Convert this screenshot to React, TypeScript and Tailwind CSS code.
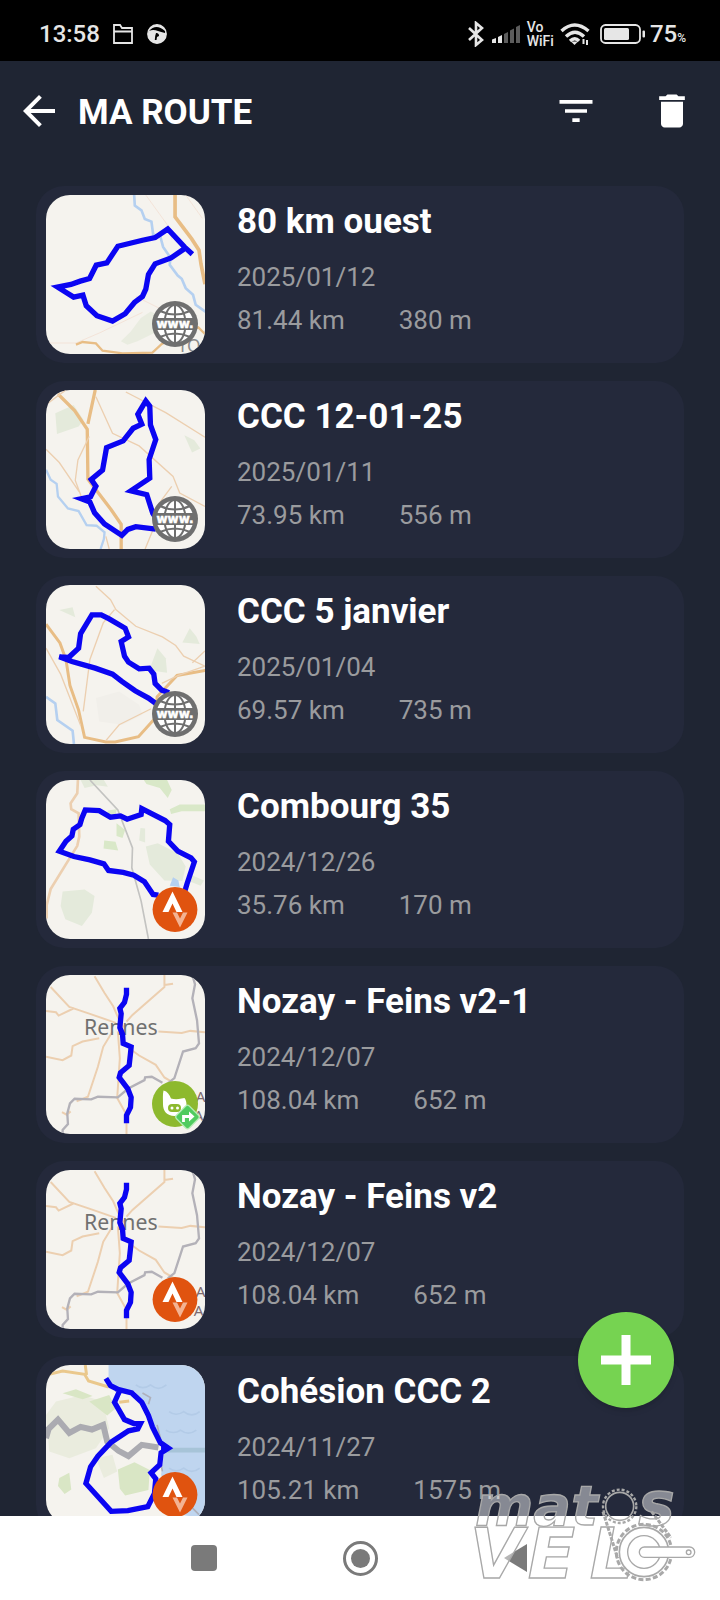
import type { ReactNode } from 'react';
import { MdArrowBack, MdDelete, MdFilterList } from 'react-icons/md';

type BadgeKind = 'web' | 'strava' | 'planner';

interface Route {
  name: string;
  date: string;
  distance: string;
  climb: string;
  badge: BadgeKind;
  map: ReactNode;
}

const ROAD = '#eccfb0';
const MAIN_ROAD = '#e8bd85';
const WATER = '#b5d0f0';
const WOOD = '#e4eadb';
const BORDER = '#b3b1b8';

function Track({ d }: { d: string }) {
  return <path d={d} fill="none" stroke="#0b05f2" strokeWidth="16" strokeLinejoin="miter" />;
}

function OuestMap() {
  return (
    <g fill="none">
      <path d="M285 370l30-20 40 20-20 40-60 30-30 10-20-10 30-30z" fill="#e9ece0" />
      <path d="M265 0l2 32 20 14 10 26 20 8 5 38 22 8 8 30 22 32-2 22 24 32 12 10 12 28 22 20 8 30 28 20h8" stroke={WATER} strokeWidth="8" />
      <path d="M388 0v66l50 66 22 34 6 42 12 60" stroke={MAIN_ROAD} strokeWidth="11" />
      <path d="M300 0l65 90 14 45M420 0l50 70M270 305l70 35M0 445h90l70-30 130-62" stroke="#f3e3d8" strokeWidth="3" />
      <path d="M90 450l20-8 40 4 20 22 60 8 90-2 28-26 60-30 50-20 20 20" stroke={MAIN_ROAD} strokeWidth="7" />
      <text x="396" y="472" fill="#8b8b8b" fontFamily="Noto Sans" fontSize="52">TO</text>
      <Track d="M440 178l-24-22-50-54-38 26-38 8-74 18-33 50-32 7-20 40-28 8-28 10-40 8 48 30 28-6 10 32 32 30 47 16 38-22 28-34 24-18 10-22 8-44 20-32 48-18 38-26" />
    </g>
  );
}

function Ccc12Map() {
  return (
    <g fill="none">
      <path d="M28 70l55-25 30 45-15 20-65 22z" fill={WOOD} />
      <path d="M416 136l30 15 18 25-25 12z" fill={WOOD} />
      <path d="M0 240l14 30 18 12 4 38 30 36 32 8 24 42 30 2 24 20-2 20-10 30" stroke={WATER} strokeWidth="7" />
      <path d="M36 12l50 50 38 56 2 150 70 92 30 44v74M148 0l-22 102" stroke={MAIN_ROAD} strokeWidth="10" />
      <path d="M0 44L60 0M150 20l50 110 80 38 102 92 20 50 76 40M240 6l120 62 118 74M378 290l-58 78M0 178l40 40 60 88M130 140l-34 70-8 62 18 48M180 440l10 38M330 400l-32 78" stroke={ROAD} strokeWidth="4" />
      <Track d="M330 418l-60-7-24 8-18 18-52-34-30-34-14-32-26-10 28-6 16-32-14-20 34-28 12-68 50-20 30-38 26-12-12-30 24-40 12 16 2 56 16 44-20 60 2 56-57 38 48 12 18 56 18 26" />
    </g>
  );
}

function Ccc5Map() {
  return (
    <g fill="none">
      <path d="M335 190l25 30 4 44-54-8z" fill={WOOD} />
      <path d="M432 130l20 25 10 22-52-4zM40 75l40-8 8 30z" fill={WOOD} />
      <path d="M150 340l70-20 60 40 10 30-60 30-70-10z" fill="#f1efea" />
      <path d="M0 336l28 20 6 50 46 32 4 40" stroke={WATER} strokeWidth="8" />
      <path d="M0 118l42 56 18 50 12 78 26 74 18 82 64 14h28l70-16 54-60 2-60 60-64 126-22" stroke={MAIN_ROAD} strokeWidth="9" />
      <path d="M150 4l44 40 16 30 60 50 80 32 40 26 24 32 64 30-80 28-50 24M206 74l-34 40-40 110-20 156M0 190l44 78 60 154M180 468l40-48 96-48M440 234l38-36" stroke={ROAD} strokeWidth="4" />
      <Track d="M370 324l-22-8-20-20-4-28-14-18-30 2-32-20-12-18-10-44 22-14-10-26-48-28-24-12h-28l-34 56-6 44-30 28-28-2 38 14 70 20 52 18 28 22 40 28 40 22 30 22" />
    </g>
  );
}

function CombourgMap() {
  return (
    <g fill="none">
      <path d="M294 0h70l14 30-12 24-24-30-40-12zM372 88l30-14h76v20h-70l-32 8zM175 182l34 4 8 26-44-6zM212 130l26 20-8 24-18-6zM185 92l28-4-6 24-20-2z" fill="#d9e8c8" />
      <path d="M300 200l36-10 60 30 24 40-10 44-54-2-44-48zM50 335l66-6 30 20-8 50-30 40-50-20-14-40zM284 144l14 2v42l-18-6zM425 280l50 22-10 16-40-16zM104 0h70l12 20-34-4-36 8z" fill={WOOD} />
      <path d="M372 318l10-26 16 10 4 20z" fill={WATER} />
      <path d="M96 0l-2 40-20 30 2 18 22 12 2 70-6 28-80 130-12 48v40" stroke={ROAD} strokeWidth="8" />
      <path d="M132 0l84 90 44 114-2 60 28 100 22 114" stroke="#c3c3c1" strokeWidth="5" />
      <Track d="M338 346l-16-2-26-38-32-20-32-8-44-6-14-20-42-12-48-10-44-16 20-30 18-16 4-20 20-14 6-20 10-24 42 2 34 20 30-4 20 10 42-14 2-18 70 36 14 12-4 50 28 30 40 20 10 12-22 66-6 20" />
    </g>
  );
}

function RennesMap() {
  return (
    <g fill="none">
      <path d="M146 4l30 50 26 40 20 46 12 18M14 36l56 60 60 20 80 28M0 108l30 4 8 10 46-22M0 246l50 10 26-14 4-28 30-14 50-10M356 0v36L260 120l-18 20M356 30l26-4M478 172l-44-4-26 6-70-4M200 170l-28 46-16 60-30 90-34 14M216 170l6 80-8 120 28 50v58M250 220l30 22 50 28 26 38 30 18M48 412l14 8 12-10" stroke={ROAD} strokeWidth="6" />
      <path d="M440 0l8 28-8 42 14 66 6 70-10 14-38 10-26 80-20 16M350 324l-32-18-20 2-2 8-50 26-30 26-60-2-20 8-50-2-14 14-8 30 2 32-16 18v14" stroke={BORDER} strokeWidth="7" />
      <text x="114" y="181" fill="#707070" fontFamily="Noto Sans" fontSize="64">Rennes</text>
      <text x="450" y="382" fill="#7d6a70" fontFamily="Noto Sans" fontSize="46">A</text>
      <text x="444" y="440" fill="#7d6a70" fontFamily="Noto Sans" fontSize="46">A</text>
      <Track d="M242 38v20l-6 24-14 18 4 16-4 42 8 20 2 28 24 10-2 20-4 36-26 22-4 14 26 34 10 26-2 30-12 24v24" />
    </g>
  );
}

function CohesionMap() {
  return (
    <g fill="none">
      <path d="M188 0v60l80 20 28 40 30 70 30 60-10 80 20 60 40 60 60 10 42 20V0z" fill="#bfd5ef" />
      <path d="M270 60q20 16 44 0 24 20 48 0M370 140q20 16 44 0 24 20 48 0M360 196q24 14 44 0 24 18 48 0M370 310q20 16 44 0 24 20 48 0" stroke="#b3cbe7" strokeWidth="5" />
      <path d="M0 150l30-40 80-20 60 20 20 80-40 60-80 30-60-20zM150 280l50-10 14 50-40 20z" fill="#eaecde" />
      <path d="M50 85l40-12 50 20-30 10zM216 314l50-22 46 24-4 60-70 16-16-20zM40 340l30-16 6 50-20 14-20-24zM130 110l60-20 20 40-26 22z" fill="#d9e6c5" />
      <path d="M0 220l8-28 28-28 34 40 34-18 34 8 34-14 12 50 34 28 30 16 40-34 50 8" stroke="#ababb1" strokeWidth="18" />
      <path d="M360 256h118" stroke="#a7c4d8" strokeWidth="14" />
      <path d="M0 30l50-12 66 10 12 20 60 18M118 0l4 30M220 112l30-4" stroke="#eac88c" strokeWidth="9" />
      <path d="M290 84l24 14-6 20M334 180l10 40M344 290l6 30M430 420l30 30" stroke="#aeb0bb" strokeWidth="5" />
      <Track d="M180 40l14 22 28 14-16 36 30 52 28 12h20l-8 16-28 6-52 34-40 42-22 32-14 50 76 84 50-2 60-12 20-40 4-44-14-18 26-24 4-36 22-14-24-16-24-48-12-34-20-40-30-28-48-12" />
      <path d="M346 226l32 24-32 16z" fill="#0b05f2" />
    </g>
  );
}

function WebBadge() {
  return (
    <svg viewBox="0 0 46 46" className="size-[46px]">
      <circle cx="23" cy="23" r="23" fill="#6f6f6f" />
      <circle cx="23" cy="23" r="18.5" fill="#fff" />
      <g fill="none" stroke="#6f6f6f" strokeWidth="2">
        <path d="M23 4v38M8 10q15 7 30 0M8 36q15-7 30 0" />
        <ellipse cx="23" cy="23" rx="10.5" ry="19" />
      </g>
      <path d="M3 17h40v12H3z" fill="#6f6f6f" />
      <text x="23" y="27" textAnchor="middle" fill="#fff" stroke="#fff" strokeWidth="0.5" fontFamily="DejaVu Sans" fontWeight="700" fontSize="12">www.</text>
    </svg>
  );
}

function StravaBadge() {
  return (
    <svg viewBox="0 0 46 46" className="size-[46px]">
      <circle cx="23" cy="23.500" r="22.400" fill="#e0530f" />
      <path d="M20.500 5.500l10 20.500h-6l-4-8.500-4 8.500h-6z" fill="#fff" />
      <path d="M20.500 26.500h4.500l3 6 3-6h4.500l-7.500 15z" fill="#f3b393" />
    </svg>
  );
}

function PlannerBadge() {
  return (
    <svg viewBox="0 0 46 46" className="size-[46px] overflow-visible">
      <circle cx="23" cy="23" r="23" fill="#8db92e" />
      <path d="M11.500 9.500c4 1 6 4 7.500 8 3 1 7 1 10.500 0l3-.5c1.500 2 2 4 2 7 0 7-5 11-12 11-7.500 0-11.500-5-11.500-11.500 0-5-.5-10 .5-14z" fill="#fff" />
      <rect x="16" y="23" width="13" height="8" rx="4" fill="#8db92e" />
      <circle cx="20" cy="27" r="1.500" fill="#fff" />
      <circle cx="25.500" cy="27" r="1.500" fill="#fff" />
      <rect x="26.500" y="27" width="18" height="18" rx="2.500" transform="rotate(45 35.500 36)" fill="#4fcb5f" stroke="#b5ecb4" strokeWidth="1.200" />
      <path d="M31.500 41v-5.500h7" fill="none" stroke="#fff" strokeWidth="2.800" />
      <path d="M37 30.500l5.500 5-5.500 5z" fill="#fff" />
    </svg>
  );
}

const badges: Record<BadgeKind, ReactNode> = {
  web: <WebBadge />,
  strava: <StravaBadge />,
  planner: <PlannerBadge />,
};

const routes: Route[] = [
  { name: '80 km ouest', date: '2025/01/12', distance: '81.44 km', climb: '380 m', badge: 'web', map: <OuestMap /> },
  { name: 'CCC 12-01-25', date: '2025/01/11', distance: '73.95 km', climb: '556 m', badge: 'web', map: <Ccc12Map /> },
  { name: 'CCC 5 janvier', date: '2025/01/04', distance: '69.57 km', climb: '735 m', badge: 'web', map: <Ccc5Map /> },
  { name: 'Combourg 35', date: '2024/12/26', distance: '35.76 km', climb: '170 m', badge: 'strava', map: <CombourgMap /> },
  { name: 'Nozay - Feins v2-1', date: '2024/12/07', distance: '108.04 km', climb: '652 m', badge: 'planner', map: <RennesMap /> },
  { name: 'Nozay - Feins v2', date: '2024/12/07', distance: '108.04 km', climb: '652 m', badge: 'strava', map: <RennesMap /> },
  { name: 'Cohésion CCC 2', date: '2024/11/27', distance: '105.21 km', climb: '1575 m', badge: 'strava', map: <CohesionMap /> },
];

function RouteCard({ route }: { route: Route }) {
  return (
    <li className="flex gap-8 rounded-[28px] bg-[#24293b] px-2.5 py-[9px]">
      <div className="relative size-[159px] shrink-0">
        <svg viewBox="0 0 478 478" className="size-full rounded-3xl bg-[#f5f3ee]">
          {route.map}
        </svg>
        <div className="absolute right-[7px] bottom-[7px]">{badges[route.badge]}</div>
      </div>
      <div className="min-w-0 pt-[5px]">
        <h2 className="truncate text-[35px] leading-[44px] font-bold text-white">{route.name}</h2>
        <p className="mt-3 text-[26px] leading-[43px]">{route.date}</p>
        <p className="flex gap-[54px] text-[26px] leading-[43px]">
          <span>{route.distance}</span>
          <span>{route.climb}</span>
        </p>
      </div>
    </li>
  );
}

function StatusBar() {
  return (
    <div className="flex h-[61px] shrink-0 items-center justify-between bg-black pt-1.5 pr-[34px] pl-[39px] text-[#e6e6e6]">
      <div className="flex items-center gap-3">
        <span className="text-[24px] leading-8 font-medium">13:58</span>
        <svg viewBox="0 0 22 22" className="size-[22px]" fill="none" stroke="currentColor" strokeWidth="1.800">
          <path d="M2 20V2h6l2 3h10v15zM2 8.500h18" />
        </svg>
        <svg viewBox="0 0 22 22" className="size-[22px]">
          <circle cx="11" cy="11" r="9.200" fill="currentColor" stroke="currentColor" strokeWidth="1.400" />
          <path d="M3 8q7-8 16 0v2q-4-1-7-2-5-2-9 0z" fill="#000" />
          <path d="M10 10a2.600 2.600 0 0 1 3 3l-2 1-.5 3H8.800l.4-4z" fill="#000" />
        </svg>
      </div>
      <div className="flex items-center gap-1.5">
        <svg viewBox="0 0 18 26" className="h-[26px] w-[18px]" fill="none" stroke="currentColor" strokeWidth="2.600">
          <path d="M2 7l13 12-6 5V2l6 5L2 19" />
        </svg>
        <svg viewBox="0 0 30 20" className="h-5 w-[30px]">
          <path d="M1 15.500l4-1.500v5H1zM7 13l4-2v8H7z" fill="currentColor" />
          <path d="M13 10l4-2v11h-4zM19 6.500l4-2V19h-4zM25 3l4-2v18h-4z" fill="#5c5c5c" />
        </svg>
        <div className="text-[14px] leading-[14px] font-medium">
          <div>Vo</div>
          <div>WiFi</div>
        </div>
        <svg viewBox="0 0 30 24" className="h-6 w-[30px]" fill="none" stroke="currentColor" strokeWidth="3.400">
          <path d="M1.500 9q13-12 27 0M6 14.500q9-8.500 18 0M10 19q5-4.500 9 0" />
          <path d="M11 19.500h7L14.500 23z" fill="currentColor" stroke="none" />
          <path d="M23.500 17v5M27 18v5" strokeWidth="2" />
        </svg>
        <svg viewBox="0 0 46 20" className="ml-1 h-5 w-[46px]">
          <rect x="1" y="1" width="39" height="18" rx="4.500" fill="none" stroke="currentColor" strokeWidth="1.800" />
          <rect x="4" y="4" width="25" height="12" rx="1.500" fill="currentColor" />
          <rect x="42.500" y="6.500" width="2.500" height="7" rx="1" fill="currentColor" />
        </svg>
        <span className="-ml-0.5 text-[24px] leading-8 font-medium">
          75<span className="text-[12px] leading-none">%</span>
        </span>
      </div>
    </div>
  );
}

function Watermark() {
  return (
    <svg
      viewBox="40 590 672 291"
      className="pointer-events-none absolute right-[23px] bottom-4 h-[97px] w-[224px] overflow-visible"
      stroke="#a8a8a8"
      strokeWidth="4"
      fontFamily="DejaVu Sans, sans-serif"
      fontWeight="700"
      fontStyle="italic"
    >
      <g fill="#ffffff" fillOpacity="0.45">
        <text x="46" y="704" fontSize="168">mat</text>
        <text x="536" y="704" fontSize="184">s</text>
        <text x="30 204 390" y="864" fontSize="208">VEL</text>
      </g>
      <g fill="none">
        <circle cx="480" cy="648" r="42" strokeWidth="5" />
        <circle cx="480" cy="648" r="50" strokeWidth="7" strokeDasharray="9 6" />
        <path d="M430 664l44 140M576 664l58 78" strokeWidth="9" strokeDasharray="12 4" />
        <circle cx="553" cy="785" r="74" fill="#ffffff" strokeWidth="5" />
        <circle cx="553" cy="785" r="83" strokeWidth="9" strokeDasharray="15 7" />
        <circle cx="553" cy="785" r="49" />
        <rect x="539" y="770" width="166" height="31" rx="15" fill="#ffffff" />
        <circle cx="687" cy="786" r="7" />
      </g>
    </svg>
  );
}

function NavigationBar() {
  return (
    <nav className="relative flex h-[84px] shrink-0 items-center justify-center gap-[108px] bg-white text-[#7a7a7a]">
      <button type="button" aria-label="Recent apps" className="flex size-12 items-center justify-center">
        <span className="size-[26px] rounded bg-current" />
      </button>
      <button type="button" aria-label="Home" className="flex size-12 items-center justify-center">
        <span className="flex size-[35px] items-center justify-center rounded-full border-[3px] border-current">
          <span className="size-[19px] rounded-full bg-current" />
        </span>
      </button>
      <button type="button" aria-label="Back" className="flex size-12 items-center justify-center">
        <svg viewBox="0 0 24 30" className="h-[30px] w-6" fill="currentColor">
          <path d="M0 15L23 1v28z" />
        </svg>
      </button>
      <Watermark />
    </nav>
  );
}

export default function App() {
  return (
    <div className="flex h-screen flex-col bg-[#1f2533] font-['Roboto',sans-serif] text-[#9a9b9e]">
      <StatusBar />
      <header className="flex h-[100px] shrink-0 items-center pr-[26px] pl-[15px] text-white">
        <button type="button" aria-label="Retour">
          <MdArrowBack className="size-12" />
        </button>
        <h1 className="ml-[15px] flex-1 pt-1 text-[35px] leading-[44px] font-bold">MA ROUTE</h1>
        <button type="button" aria-label="Filtrer">
          <MdFilterList className="size-11" />
        </button>
        <button type="button" aria-label="Supprimer" className="ml-13">
          <MdDelete className="size-11" />
        </button>
      </header>
      <main className="relative min-h-0 flex-1 overflow-hidden px-9 pt-[25px]">
        <ul className="flex flex-col gap-[18px]">
          {routes.map((route) => (
            <RouteCard key={route.name} route={route} />
          ))}
        </ul>
        <button
          type="button"
          aria-label="Ajouter une route"
          className="absolute right-[46px] bottom-[108px] flex size-24 items-center justify-center rounded-full bg-[#76d351] text-white shadow-md"
        >
          <svg viewBox="0 0 50 50" className="size-[50px]" stroke="currentColor" strokeWidth="9">
            <path d="M25 0v50M0 25h50" />
          </svg>
        </button>
      </main>
      <NavigationBar />
    </div>
  );
}
